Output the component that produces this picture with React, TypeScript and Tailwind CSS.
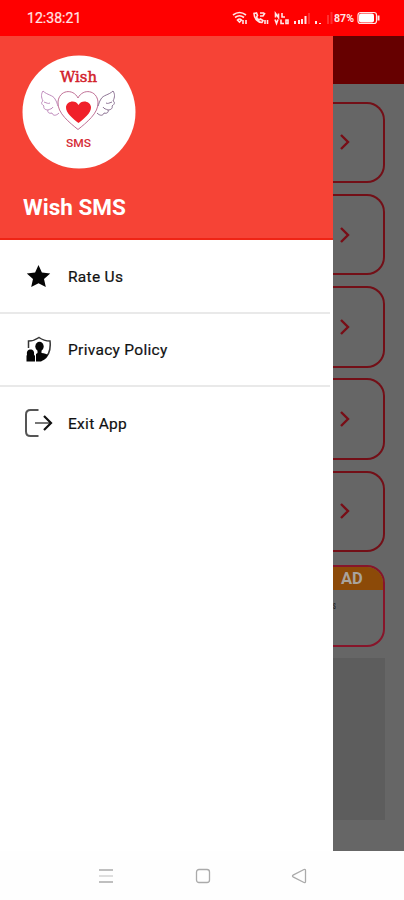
import React from "react";

interface MenuItemProps {
    icon: React.ReactNode;
    label: string;
    last?: boolean;
}

const MenuItem: React.FC<MenuItemProps> = ({ icon, label, last }) => (
    <div className={`flex items-center pl-6 ${last ? "h-[71px]" : "mr-[3px] h-[73.500px] border-b-2 border-[#e9e9e9]"}`}>
        <div className="flex w-11 items-center">{icon}</div>
        <span className="pt-0.5 text-[15.500px] leading-6 tracking-[0.3px] text-[#111] [-webkit-text-stroke:0.2px_#111]">{label}</span>
    </div>
);

const StarIcon = () => (
    <svg width="28" height="28" viewBox="0 0 28 28">
        <path d="M14.500 3l3.400 7.600 8.300.9-6.200 5.500 1.800 8-7.300-3.700L7.200 25 9 17l-6.200-5.500 8.300-.9z" fill="#050505" />
    </svg>
);

const PrivacyIcon = () => (
    <svg width="28" height="28" viewBox="0 0 28 28">
        <path d="M4.500 13V6c4 0 7-1 10.500-3.500 3.500 2.500 6.500 3.500 11 3.500 1 9-1 15-7 18.500" fill="none" stroke="#333" strokeWidth="1.500" />
        <ellipse cx="15.500" cy="11.500" rx="4.200" ry="4.700" fill="#050505" />
        <path d="M13.500 13h4v5c3 .5 5 .5 6.500 2-1.500 3-4 5-7 6.500h-5v-7.500l1.500-1z" fill="#050505" />
        <path d="M3 19.500c-.5-3.500 1-5 3.500-5s4 1.500 3.500 5l1 1.500v5.500H2.500V21z" fill="#050505" />
    </svg>
);

const ExitIcon = () => (
    <svg width="30" height="30" viewBox="0 0 30 30" fill="none">
        <path d="M14.500 2H6.500Q2 2 2 6.500v17Q2 28 6.500 28h8" stroke="#555" strokeWidth="2" />
        <path d="M11 15h15" stroke="#777" strokeWidth="2" />
        <path d="M20 8l7 7-7 7" stroke="#111" strokeWidth="2.200" />
    </svg>
);

const Logo = () => (
    <svg width="114" height="114" viewBox="0 0 114 114">
        <circle cx="57" cy="57" r="56.500" fill="#fff" />
        <text x="38" y="27" textLength="37" fontSize="15" fontWeight="500" fill="#d2202a" stroke="#d2202a" strokeWidth=".5" fontFamily="'DejaVu Serif', 'Liberation Serif', serif" lengthAdjust="spacingAndGlyphs">Wish</text>
        <path d="M56 74.500C48 68 35 58 36 47c1-12 15-14 20-4 5-10 19-8 20 4 1 11-12 21-20 27.500z" fill="none" stroke="#c07096" strokeWidth="1" />
        <path d="M56.500 68c-5-4-13-10-12.500-16C44.500 46 53.500 44 56.500 50c3-6 12-4 12.500 2C69.500 58 61.500 64 56.500 68z" fill="#f0202a" />
        <path d="M37 58c-3 3-6 3-7 0-3 1-5-1-4-3-3 0-5-2-4-4-3-2-3-4-1-5-2-4-2-7 0-10 4 4 10 4 12 8 2 3 2 5 3 7M22 47c3 1 4 2 6 1M26 55c2-1 4-1 5-3" fill="none" stroke="#b87eb4" strokeWidth=".9" />
        <path d="M75 58c3 3 6 3 7 0 3 1 5-1 4-3 3 0 5-2 4-4 3-2 3-4 1-5 2-4 2-7 0-10-4 4-10 4-12 8-2 3-2 5-3 7M90 47c-3 1-4 2-6 1M86 55c-2-1-4-1-5-3" fill="none" stroke="#806488" strokeWidth=".9" />
        <text x="44" y="92" textLength="25" fontSize="11.500" fontWeight="500" fill="#d52b35" lengthAdjust="spacingAndGlyphs">SMS</text>
    </svg>
);

const StatusIcons = () => (
    <svg width="152" height="20" viewBox="0 0 152 20" fill="none" stroke="#ffe5e5" strokeWidth="1.600">
        {/* wifi */}
        <path d="M1 7q6.500-5 13 0M3 9.500q4.500-3.500 9 0M5.500 12q2-2 4 0l-2 2zM11 16v-4M14 12v4" />
        {/* call */}
        <path d="M22 5.500c0 5 4 9 8 9l1-2-2.500-1.500-1.500 1c-1.500-1-2-2-2.500-3l1-1.500-1-2.500zM28 5h4M28 8h3l2-3M33 12v4M35.500 12v4" />
        {/* volte */}
        <path d="M43.500 9.500v-4l3 4v-4M50 5v4h3M43 11.500l1.500 4 1.500-4M49 11.500v4h3M54 12v3.500h2V12z" />
        {/* signals */}
        <path d="M63 16v-3M67 16v-4M70 16v-5M73.500 16V8" strokeWidth="2" />
        <path d="M77 16V5M96 16V7M99.500 16V4" stroke="#ff3030" strokeWidth="2" />
        <path d="M84 16v-3M88 16v-1" strokeWidth="2" />
        <text x="102" y="14" textLength="20" fontSize="10" fontWeight="700" fill="#ffe5e5" stroke="none" lengthAdjust="spacingAndGlyphs">87%</text>
        <rect x="126" y="4.500" width="18.500" height="11" rx="2.500" strokeWidth="1.200" />
        <rect x="127" y="5.500" width="15" height="9" rx="2" fill="#fff" stroke="none" />
        <path d="M146.500 7.500v5" strokeWidth="2" />
    </svg>
);

const Chevron = () => (
    <svg width="12" height="18" viewBox="0 0 12 18" fill="none">
        <path d="M2 2l7 7-7 7" stroke="#780d16" strokeWidth="2.400" />
    </svg>
);

const App: React.FC = () => {
    return (
        <div className="flex h-[900px] w-[404px] flex-col overflow-hidden bg-white font-['Roboto',sans-serif]">
            <div className="flex h-9 shrink-0 items-center justify-between bg-[#ff0000] pr-[20px] pl-[27px]">
                <span className="pt-px text-[14px] tracking-[0.05px] text-[#ffe5e5] [-webkit-text-stroke:0.2px_#ffe5e5]">12:38:21</span>
                <StatusIcons />
            </div>

            <div className="flex h-[815px] shrink-0">
                {/* Drawer */}
                <div className="w-[333px] bg-white">
                    <div className="h-[204px] border-b-2 border-[#ef2415] bg-[#f64336] pt-[18.500px] pl-[22px]">
                        <Logo />
                        <h1 className="mt-[22.500px] pl-px text-[22.500px] leading-8 font-bold text-white">Wish SMS</h1>
                    </div>
                    <MenuItem icon={<StarIcon />} label="Rate Us" />
                    <MenuItem icon={<PrivacyIcon />} label="Privacy Policy" />
                    <MenuItem icon={<ExitIcon />} label="Exit App" last />
                </div>

                {/* Dimmed page behind the drawer */}
                <div className="w-[71px] bg-[#666666]">
                    <div className="h-12 bg-[#660000]" />
                    <div className="flex flex-col gap-[10.800px] pt-[17.500px] pr-[19px]">
                        {[1, 2, 3, 4, 5].map((item) => (
                            <div key={item} className="flex h-[81.500px] items-center rounded-r-[18px] border-2 border-l-0 border-[#730f17] pl-[6px]">
                                <Chevron />
                            </div>
                        ))}
                    </div>
                    <div className="mt-[13px] mr-[19px] h-[82px] overflow-hidden rounded-r-[18px] border-2 border-l-0 border-[#87152a]">
                        <div className="h-[22.500px] bg-[#8c4a08] pl-2 text-[16.500px] leading-[23px] font-bold text-[#a9a39d]">AD</div>
                        <div className="pt-[8px] text-[11px] leading-4 font-medium text-[#222]">
                            <span className="inline-block origin-left scale-x-50">s</span>
                        </div>
                    </div>
                    <div className="mt-[11px] mr-[19px] h-[162px] bg-[#5d5d5d]" />
                </div>
            </div>

            <div className="flex grow items-center justify-between bg-[#fefefe] px-[98px]">
                <svg width="16" height="16" viewBox="0 0 16 16" stroke="#aaa" strokeWidth="1.300">
                    <path d="M1 2h14M1 14h14" />
                    <path d="M1 8h14" stroke="#ccc" />
                </svg>
                <svg width="16" height="16" viewBox="0 0 16 16" fill="none" stroke="#aaa" strokeWidth="1.300" className="translate-x-px">
                    <rect x="1.500" y="1.500" width="13" height="13" rx="2.500" />
                </svg>
                <svg width="16" height="16" viewBox="0 0 16 16" fill="none" stroke="#aaa" strokeWidth="1.300" strokeLinejoin="round" className="translate-x-px">
                    <path d="M2 7.200L13 1.500q1.500-.5 1.500 1v11q0 1.500-1.500 1L2 8.800q-1-.8 0-1.600z" />
                </svg>
            </div>
        </div>
    );
};

export default App;
